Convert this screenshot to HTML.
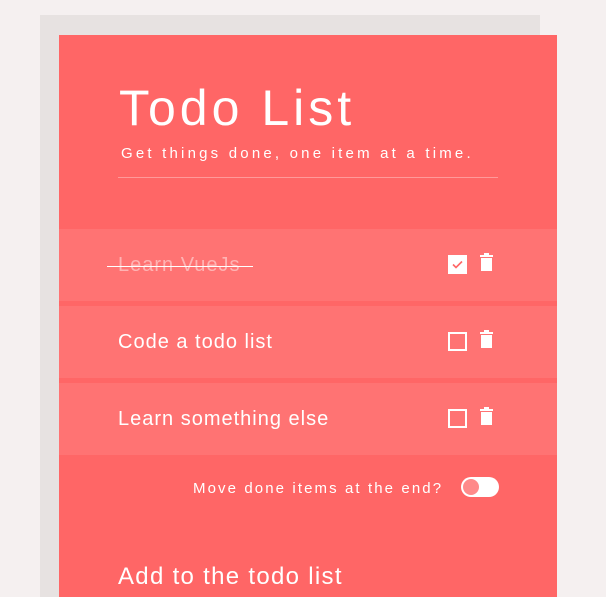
<!DOCTYPE html>
<html><head><style>
html,body{margin:0;width:606px;height:597px;overflow:hidden}
body{background:#f5f0f0;font-family:"Liberation Sans",sans-serif;position:relative}
.shadow{position:absolute;left:40px;top:15px;width:500px;height:600px;background:#e7e2e1}
.card{position:absolute;left:59px;top:35px;width:498px;height:562px;background:#ff6666;color:#fff}
h1{position:absolute;left:60px;top:48px;margin:0;font-weight:300;font-size:50px;letter-spacing:4px;line-height:1}
.sub{position:absolute;left:62px;top:110px;font-size:15px;letter-spacing:3.2px}
.line{position:absolute;left:59px;top:142px;width:380px;height:1px;background:#ff9a9a}
.row{position:absolute;left:0;width:498px;height:72px;background:#ff7373}
.row span{position:absolute;left:59px;top:25px;font-size:20px;letter-spacing:1px}
.done span{color:#ffb3b3}
.strike{position:absolute;left:48px;top:37px;width:146px;height:1px;background:#fff}
.cb{position:absolute;left:389px;top:26px;width:15px;height:15px;border:2px solid #fff;box-sizing:content-box}
.cb.on{background:#fff}
.tr{position:absolute;left:421px;top:24px}
.mv{position:absolute;left:134px;top:445px;font-size:15px;letter-spacing:2.1px}
.tg{position:absolute;left:402px;top:442px;width:38px;height:20px;border-radius:10px;background:#fff}
.tg i{position:absolute;left:2px;top:2px;width:16px;height:16px;border-radius:50%;background:#ff8a8a}
.add{position:absolute;left:59px;top:528px;font-size:24px;letter-spacing:1.3px}
</style></head><body>
<div class="shadow"></div>
<div class="card">
<h1>Todo List</h1>
<div class="sub">Get things done, one item at a time.</div>
<div class="line"></div>
<div class="row done" style="top:194px"><span>Learn VueJs</span><div class="strike"></div><div class="cb on"><svg width="15" height="15" viewBox="0 0 15 15" style="position:absolute;left:0;top:0"><path d="M3 7.5l3 3 6-6" stroke="#ff6666" stroke-width="1.6" fill="none"/></svg></div><svg class="tr" width="13" height="18" viewBox="0 0 13 18"><rect x="0" y="2" width="13" height="2" fill="#fff"/><rect x="4" y="0" width="5" height="2" fill="#fff"/><rect x="1" y="5" width="11" height="13" fill="#fff"/></svg></div>
<div class="row" style="top:271px"><span>Code a todo list</span><div class="cb"></div><svg class="tr" width="13" height="18" viewBox="0 0 13 18"><rect x="0" y="2" width="13" height="2" fill="#fff"/><rect x="4" y="0" width="5" height="2" fill="#fff"/><rect x="1" y="5" width="11" height="13" fill="#fff"/></svg></div>
<div class="row" style="top:348px"><span>Learn something else</span><div class="cb"></div><svg class="tr" width="13" height="18" viewBox="0 0 13 18"><rect x="0" y="2" width="13" height="2" fill="#fff"/><rect x="4" y="0" width="5" height="2" fill="#fff"/><rect x="1" y="5" width="11" height="13" fill="#fff"/></svg></div>
<div class="mv">Move done items at the end?</div>
<div class="tg"><i></i></div>
<div class="add">Add to the todo list</div>
</div>
</body></html>
